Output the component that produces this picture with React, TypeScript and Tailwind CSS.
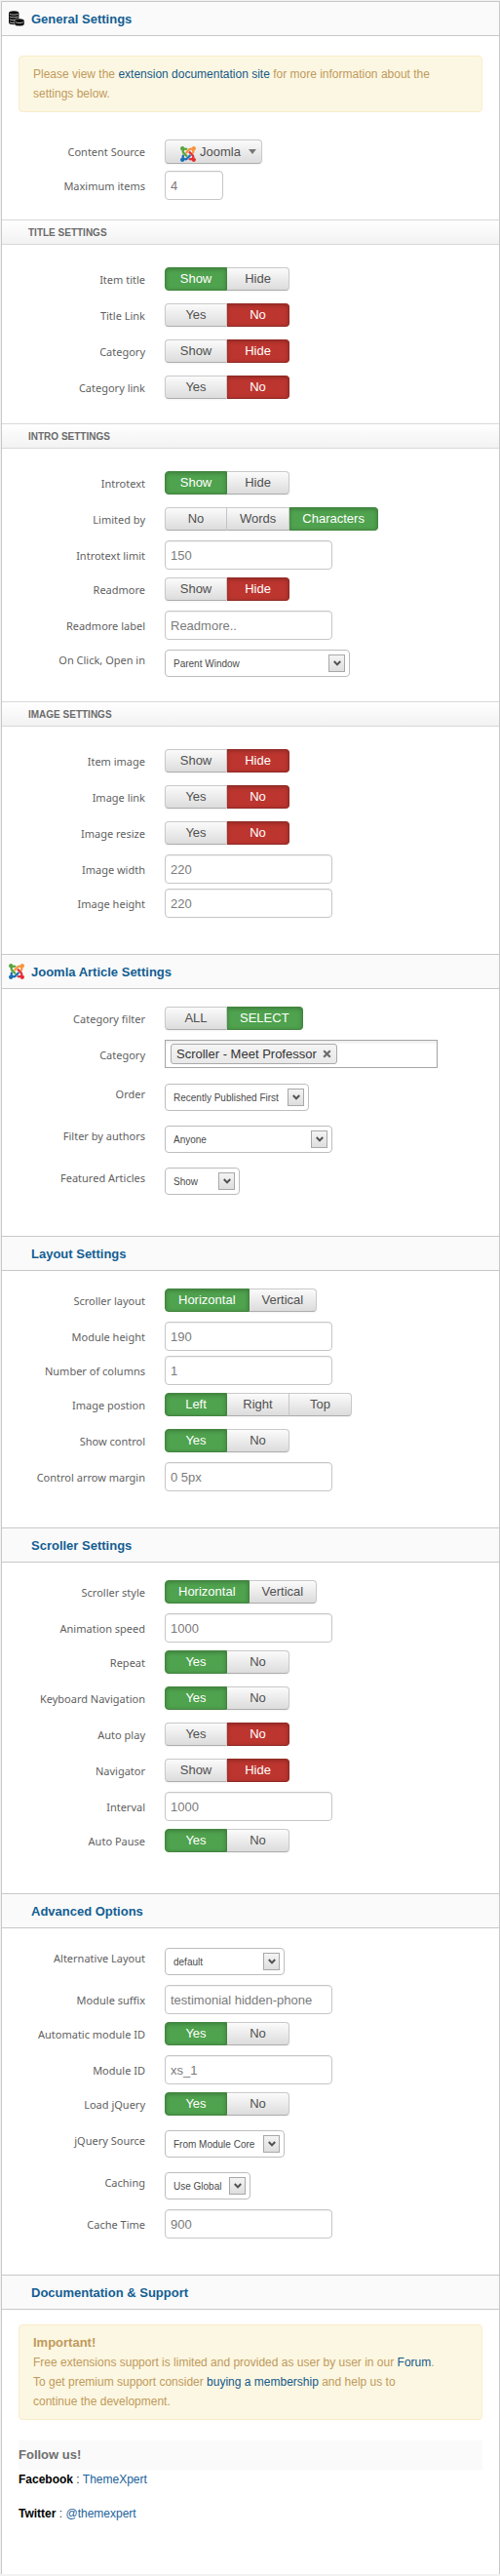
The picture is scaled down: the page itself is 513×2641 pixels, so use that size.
import { useId, useState } from "react";
import type { ReactNode } from "react";

const JOOMLA_ARM =
  "M16.719 14.759L14.22 17.26l-2.37 2.37-.462.466c-1.368 1.365-3.297 1.83-5.047 1.397-.327 1.424-1.604 2.486-3.13 2.486C1.438 23.979 0 22.542 0 20.767c0-1.518 1.055-2.79 2.469-3.126-.446-1.76.016-3.705 1.395-5.08l.179-.18 2.37 2.37-.184.181c-.769.779-.769 2.024 0 2.789.771.78 2.022.78 2.787 0l.465-.465 2.367-2.371 2.502-2.506 2.369 2.38z";

function JoomlaIcon() {
  return (
    <svg viewBox="0 0 24 24" className="size-4 shrink-0" aria-hidden="true">
      <path d={JOOMLA_ARM} fill="#5ba53b" transform="rotate(90 12 12)" />
      <path d={JOOMLA_ARM} fill="#f8943b" transform="rotate(180 12 12)" />
      <path d={JOOMLA_ARM} fill="#e42f35" transform="rotate(270 12 12)" />
      <path d={JOOMLA_ARM} fill="#1b6fb5" />
    </svg>
  );
}

function CoinsIcon() {
  return (
    <svg viewBox="0 0 16 16" className="size-4 shrink-0" aria-hidden="true">
      <path d="M0 2.5C0 1 2 .2 5.2.2s5.2.8 5.2 2.3v9.7c0 1.3-2 2-5.2 2S0 13.400 0 12.200z" fill="#0c0c0c" />
      <path
        d="M.8 3.300c1 1.100 7.800 1.100 8.800 0M.8 6c1 1.100 7.800 1.100 8.800 0M.8 8.700c1 1.100 5 1.100 6.600.700M.8 11.400c1 1 3 1.100 4.800 1"
        fill="none"
        stroke="#d8d8d8"
        strokeWidth=".8"
      />
      <path d="M5.800 10.400c0-1.500 2-2.400 5.100-2.400S16 8.900 16 10.400v3c0 1.500-2 2.400-5.100 2.400s-5.100-.9-5.100-2.400z" fill="#0c0c0c" stroke="#f4f4f4" strokeWidth=".5" />
      <path d="M7 11.600c1.500 1.300 6.500 1.300 8 0" fill="none" stroke="#d8d8d8" strokeWidth=".8" />
    </svg>
  );
}

function SectionHeader({ title, icon, first }: { title: string; icon?: ReactNode; first?: boolean }) {
  return (
    <header
      className={`flex items-center border-b border-[#c8c8c8] bg-[#fafafa] ${first ? "h-[35px]" : "h-9 border-t"}`}
    >
      <span className="flex w-[30px] justify-center pr-px">{icon}</span>
      <h2 className="pt-px text-[13px] leading-5 font-bold text-[#135e93]">{title}</h2>
    </header>
  );
}

function SubHeader({ title }: { title: string }) {
  return (
    <h3 className="flex h-[26px] items-center border-y border-[#d8d8d8] bg-linear-to-b from-white to-[#f2f2f2] pl-[27px] text-[10px] font-bold text-[#6b6b6b] uppercase">
      {title}
    </h3>
  );
}

function Row({ label, id, className, children }: { label: string; id: string; className: string; children: ReactNode }) {
  return (
    <div className={`flex items-start gap-5 ${className}`}>
      <label
        id={`${id}-label`}
        htmlFor={id}
        className="w-[147px] shrink-0 text-right font-['Noto_Sans',sans-serif] text-[11px] leading-8 text-[#5f5f5f]"
      >
        {label}
      </label>
      {children}
    </div>
  );
}

type Tone = "green" | "red";

const TONES: Record<Tone, string> = {
  green: "border-[#43853f] bg-[#4fa24e] text-white shadow-[inset_0_1px_4px_rgba(0,0,0,0.25)]",
  red: "border-[#8f2a25] bg-[#bd352f] text-white shadow-[inset_0_1px_4px_rgba(0,0,0,0.25)]",
};

const IDLE =
  "border-[#c9c9c9] border-b-[#adadad] bg-linear-to-b from-[#fbfbfb] to-[#dcdcdc] text-[#505050] shadow-[0_1px_2px_rgba(0,0,0,0.05)]";

function Toggle({ label, options, value }: { label: string; options: string[]; value: string }) {
  const id = useId();
  const [picked, setPicked] = useState(value);
  return (
    <Row label={label} id={id} className="h-[37px]">
      <div role="group" aria-labelledby={`${id}-label`} className="mt-[3px] flex">
        {options.map((option, i) => {
          const active = option === picked;
          const tone: Tone = option === "No" || option === "Hide" ? "red" : "green";
          return (
            <button
              key={option}
              id={i === 0 ? id : undefined}
              type="button"
              aria-pressed={active}
              onClick={() => setPicked(option)}
              className={`h-6 min-w-16 border px-[13px] text-center text-[13px] leading-[22px] first:rounded-l last:rounded-r not-first:border-l-0 ${
                active ? TONES[tone] : IDLE
              }`}
            >
              {option}
            </button>
          );
        })}
      </div>
    </Row>
  );
}

function TextField({ label, value, narrow }: { label: string; value: string; narrow?: boolean }) {
  const id = useId();
  return (
    <Row label={label} id={id} className="h-[35px]">
      <input
        id={id}
        type="text"
        defaultValue={value}
        className={`h-[30px] rounded border border-[#c6c6c6] bg-white px-[5px] text-[13px] text-[#7b7b7b] shadow-[inset_0_1px_1px_rgba(0,0,0,0.06)] ${
          narrow ? "w-[60px]" : "w-[172px]"
        }`}
      />
    </Row>
  );
}

function SelectField({ label, options, width }: { label: string; options: string[]; width: string }) {
  const id = useId();
  return (
    <Row label={label} id={id} className="h-[43px]">
      <div className={`relative mt-[5px] ${width}`}>
        <select
          id={id}
          defaultValue={options[0]}
          className="h-7 w-full appearance-none rounded border border-[#bdbdbd] bg-white pr-6 pl-2 text-[10px] text-[#4a4a4a]"
        >
          {options.map((option) => (
            <option key={option}>{option}</option>
          ))}
        </select>
        <span className="pointer-events-none absolute top-[5px] right-[5px] flex h-[18px] w-[17px] items-center justify-center border border-[#a8a8a8] bg-linear-to-b from-[#f4f4f4] to-[#dedede]">
          <svg viewBox="0 0 8 6" className="h-1.5 w-2" aria-hidden="true">
            <path d="M.8 1l3.200 3.400L7.200 1" fill="none" stroke="#505050" strokeWidth="2" />
          </svg>
        </span>
      </div>
    </Row>
  );
}

function SourceField() {
  const id = useId();
  return (
    <Row label="Content Source" id={id} className="h-[35px]">
      <button
        id={id}
        type="button"
        aria-haspopup="menu"
        className={`mt-[3px] flex h-[25px] w-[100px] items-center rounded-sm border pl-[15px] text-[13px] ${IDLE}`}
      >
        <span className="pt-1">
          <JoomlaIcon />
        </span>
        <span className="ml-1">Joomla</span>
        <span className="ml-2 border-x-4 border-t-[5px] border-x-transparent border-t-[#777]" />
      </button>
    </Row>
  );
}

function CategoryField() {
  const id = useId();
  const [tags, setTags] = useState(["Scroller - Meet Professor"]);
  return (
    <Row label="Category" id={id} className="h-10">
      <div className="flex h-[29px] w-[280px] items-center border border-[#a6a6a6] bg-white pl-[5px] shadow-[inset_0_2px_3px_rgba(0,0,0,0.08)]">
        {tags.map((tag) => (
          <span
            key={tag}
            className="flex h-[21px] shrink-0 items-center gap-1.5 rounded-[3px] border border-[#aaa] bg-linear-to-b from-[#f4f4f4] to-[#e9e9e9] px-[5px] text-[13px] whitespace-nowrap text-[#333]"
          >
            {tag}
            <button type="button" aria-label={`Remove ${tag}`} onClick={() => setTags(tags.filter((t) => t !== tag))}>
              <svg viewBox="0 0 9 9" className="size-[9px]" aria-hidden="true">
                <path d="M1.200 1.200l6.600 6.600M7.800 1.200L1.200 7.800" stroke="#6c6c6c" strokeWidth="2.200" />
              </svg>
            </button>
          </span>
        ))}
        <input id={id} type="text" className="min-w-0 flex-1 bg-transparent px-1 text-[13px] outline-none" />
      </div>
    </Row>
  );
}

function Notice({ children }: { children: ReactNode }) {
  return (
    <div className="mx-[17px] rounded border border-[#faeccb] bg-[#fcf7e2] px-[14px] py-2 text-[12px] leading-5 text-[#c09a5c]">
      {children}
    </div>
  );
}

const LINK = "text-[#13598a]";

export default function App() {
  return (
    <div className="bg-[#f2f2f2] pt-px pb-0.5 pl-px font-['Liberation_Sans',Arial,sans-serif]">
      <main className="border-x border-t border-[#c8c8c8] bg-white">
        <section>
          <SectionHeader title="General Settings" icon={<CoinsIcon />} first />
          <div className="pt-5 pb-[25px]">
            <Notice>
              Please view the{" "}
              <a href="#docs" className={LINK}>
                extension documentation site
              </a>{" "}
              for more information about the
              <br />
              settings below.
            </Notice>
          </div>
          <div className="pb-[15px]">
            <SourceField />
            <TextField label="Maximum items" value="4" narrow />
          </div>

          <SubHeader title="Title Settings" />
          <div className="pt-5 pb-[15px]">
            <Toggle label="Item title" options={["Show", "Hide"]} value="Show" />
            <Toggle label="Title Link" options={["Yes", "No"]} value="No" />
            <Toggle label="Category" options={["Show", "Hide"]} value="Hide" />
            <Toggle label="Category link" options={["Yes", "No"]} value="No" />
          </div>

          <SubHeader title="Intro Settings" />
          <div className="pt-5 pb-[15px]">
            <Toggle label="Introtext" options={["Show", "Hide"]} value="Show" />
            <Toggle label="Limited by" options={["No", "Words", "Characters"]} value="Characters" />
            <TextField label="Introtext limit" value="150" />
            <Toggle label="Readmore" options={["Show", "Hide"]} value="Hide" />
            <TextField label="Readmore label" value="Readmore.." />
            <SelectField label="On Click, Open in" options={["Parent Window", "New Window"]} width="w-[190px]" />
          </div>

          <SubHeader title="Image Settings" />
          <div className="pt-5 pb-8">
            <Toggle label="Item image" options={["Show", "Hide"]} value="Hide" />
            <Toggle label="Image link" options={["Yes", "No"]} value="No" />
            <Toggle label="Image resize" options={["Yes", "No"]} value="No" />
            <TextField label="Image width" value="220" />
            <TextField label="Image height" value="220" />
          </div>
        </section>

        <section>
          <SectionHeader title="Joomla Article Settings" icon={<JoomlaIcon />} />
          <div className="pt-[15px] pb-8">
            <Toggle label="Category filter" options={["ALL", "SELECT"]} value="SELECT" />
            <CategoryField />
            <SelectField label="Order" options={["Recently Published First"]} width="w-[148px]" />
            <SelectField label="Filter by authors" options={["Anyone"]} width="w-[172px]" />
            <SelectField label="Featured Articles" options={["Show", "Hide"]} width="w-[77px]" />
          </div>
        </section>

        <section>
          <SectionHeader title="Layout Settings" />
          <div className="pt-[15px] pb-8">
            <Toggle label="Scroller layout" options={["Horizontal", "Vertical"]} value="Horizontal" />
            <TextField label="Module height" value="190" />
            <TextField label="Number of columns" value="1" />
            <Toggle label="Image postion" options={["Left", "Right", "Top"]} value="Left" />
            <Toggle label="Show control" options={["Yes", "No"]} value="Yes" />
            <TextField label="Control arrow margin" value="0 5px" />
          </div>
        </section>

        <section>
          <SectionHeader title="Scroller Settings" />
          <div className="pt-[15px] pb-8">
            <Toggle label="Scroller style" options={["Horizontal", "Vertical"]} value="Horizontal" />
            <TextField label="Animation speed" value="1000" />
            <Toggle label="Repeat" options={["Yes", "No"]} value="Yes" />
            <Toggle label="Keyboard Navigation" options={["Yes", "No"]} value="Yes" />
            <Toggle label="Auto play" options={["Yes", "No"]} value="No" />
            <Toggle label="Navigator" options={["Show", "Hide"]} value="Hide" />
            <TextField label="Interval" value="1000" />
            <Toggle label="Auto Pause" options={["Yes", "No"]} value="Yes" />
          </div>
        </section>

        <section>
          <SectionHeader title="Advanced Options" />
          <div className="pt-[15px] pb-8">
            <SelectField label="Alternative Layout" options={["default"]} width="w-[123px]" />
            <TextField label="Module suffix" value="testimonial hidden-phone" />
            <Toggle label="Automatic module ID" options={["Yes", "No"]} value="Yes" />
            <TextField label="Module ID" value="xs_1" />
            <Toggle label="Load jQuery" options={["Yes", "No"]} value="Yes" />
            <SelectField label="jQuery Source" options={["From Module Core"]} width="w-[123px]" />
            <SelectField label="Caching" options={["Use Global"]} width="w-[88px]" />
            <TextField label="Cache Time" value="900" />
          </div>
        </section>

        <section>
          <SectionHeader title="Documentation & Support" />
          <div className="pt-[15px] pb-[21px]">
            <Notice>
              <h4 className="text-[13px] font-bold">Important!</h4>
              <p>
                Free extensions support is limited and provided as user by user in our{" "}
                <a href="#forum" className={LINK}>
                  Forum
                </a>
                .
                <br />
                To get premium support consider{" "}
                <a href="#membership" className={LINK}>
                  buying a membership
                </a>{" "}
                and help us to
                <br />
                continue the development.
              </p>
            </Notice>
          </div>
          <div className="px-[17px] pb-[52px] text-[12px] leading-5 text-[#333]">
            <h4 className="bg-[#fafafa] text-[13px] leading-[30px] font-bold text-[#6f6f6f]">Follow us!</h4>
            <p>
              <strong className="text-black">Facebook</strong> :{" "}
              <a href="#facebook" className="text-[#1b629b]">
                ThemeXpert
              </a>
            </p>
            <p className="mt-[15px]">
              <strong className="text-black">Twitter</strong> :{" "}
              <a href="#twitter" className="text-[#1b629b]">
                @themexpert
              </a>
            </p>
          </div>
        </section>
      </main>
    </div>
  );
}
